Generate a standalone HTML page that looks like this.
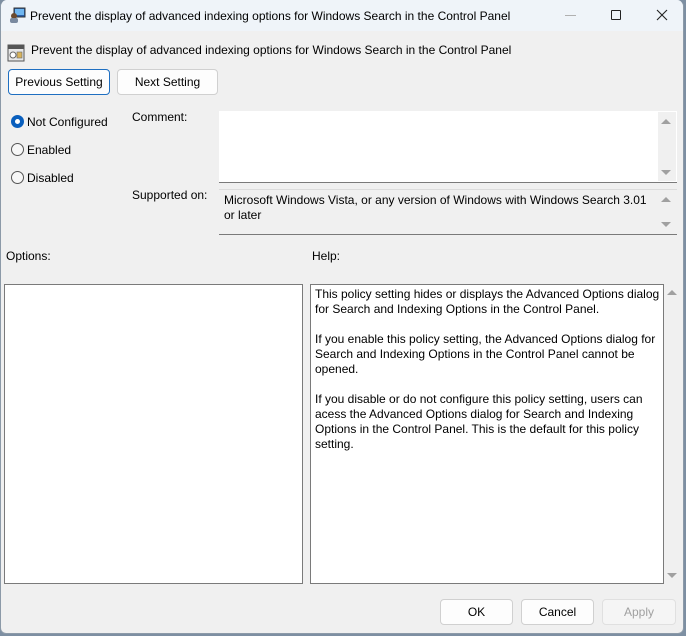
<!DOCTYPE html>
<html><head><meta charset="utf-8"><style>
*{margin:0;padding:0;box-sizing:border-box}
body{width:686px;height:636px;background:#7d8fa2;position:relative;overflow:hidden;font-family:"Liberation Sans",sans-serif;font-size:12px;color:#000}
.win{position:absolute;left:0;top:0;width:684px;height:634px;background:#f0f0f0;border-radius:7px 7px 6px 6px;overflow:hidden;border:1px solid #8c9aa8;border-top:none}
.tb{position:absolute;left:0;top:0;width:100%;height:31px;background:#eff4f9}
.a{position:absolute;white-space:nowrap}
.btn{position:absolute;height:26px;background:#fdfdfd;border:1px solid #d0d0d0;border-radius:4px;text-align:center;line-height:24px}
.box{position:absolute;background:#fff;border:1px solid #7a7a7a}
.rad{position:absolute;left:10px;width:13px;height:13px;border-radius:50%;border:1px solid #555;background:#f7f7f7}
.up,.dn{position:absolute;width:0;height:0;border-left:5px solid transparent;border-right:5px solid transparent}
.up{border-bottom:5px solid #a0a0a0}.dn{border-top:5px solid #a0a0a0}
.help{line-height:15px}
</style></head><body>
<div class="win">
<div class="tb"></div>
<svg class="a" style="left:8px;top:7px" width="17" height="17" viewBox="0 0 17 17"><rect x="5" y="1" width="11" height="9" fill="#2a5fa8" stroke="#333" stroke-width="1"/><rect x="6" y="2" width="9" height="6" fill="#6fb6f0"/><circle cx="5" cy="9" r="3" fill="#6b4a2e"/><rect x="1" y="11" width="8" height="5" rx="2" fill="#7a8aa0"/></svg>
<div class="a" style="left:29px;top:9px">Prevent the display of advanced indexing options for Windows Search in the Control Panel</div>
<div class="a" style="left:564px;top:15px;width:11px;height:1px;background:#b0b0b0"></div>
<div class="a" style="left:610px;top:10px;width:10px;height:10px;border:1px solid #222;border-radius:1px"></div>
<svg class="a" style="left:655px;top:9px" width="12" height="12"><path d="M1 1L11 11M11 1L1 11" stroke="#222" stroke-width="1.1"/></svg>
<svg class="a" style="left:6px;top:44px" width="18" height="18" viewBox="0 0 18 18"><rect x="1" y="1" width="16" height="16" fill="#e8e8e8" stroke="#555"/><rect x="1" y="1" width="16" height="4" fill="#555"/><circle cx="6" cy="11" r="3" fill="#fff" stroke="#666"/><rect x="10" y="8" width="5" height="6" fill="#d9b35a" stroke="#666" stroke-width=".6"/></svg>
<div class="a" style="left:30px;top:43px">Prevent the display of advanced indexing options for Windows Search in the Control Panel</div>
<div class="btn" style="left:7px;top:69px;width:102px;border-color:#1f6fc1">Previous Setting</div>
<div class="btn" style="left:116px;top:69px;width:101px">Next Setting</div>
<div class="rad" style="top:115px;border:4px solid #0a5fbd;background:#fff"></div>
<div class="a" style="left:26px;top:115px">Not Configured</div>
<div class="rad" style="top:143px"></div><div class="a" style="left:26px;top:143px">Enabled</div>
<div class="rad" style="top:171px"></div><div class="a" style="left:26px;top:171px">Disabled</div>
<div class="a" style="left:131px;top:110px">Comment:</div>
<div class="box" style="left:218px;top:111px;width:458px;height:72px;border:none;border-bottom:1px solid #7a7a7a"></div>
<div class="a" style="left:657px;top:112px;width:18px;height:69px;background:#f0f0f0"></div>
<div class="up" style="left:660px;top:119px"></div><div class="dn" style="left:660px;top:170px"></div>
<div class="a" style="left:131px;top:188px">Supported on:</div>
<div class="box" style="left:218px;top:189px;width:458px;height:46px;background:#f0f0f0;border:none;border-bottom:1px solid #7a7a7a;border-top:1px solid #dcdcdc"></div>
<div class="a" style="left:223px;top:193px;line-height:15px">Microsoft Windows Vista, or any version of Windows with Windows Search 3.01<br>or later</div>
<div class="up" style="left:660px;top:197px"></div><div class="dn" style="left:660px;top:222px"></div>
<div class="a" style="left:5px;top:249px">Options:</div>
<div class="a" style="left:311px;top:249px">Help:</div>
<div class="box" style="left:3px;top:284px;width:299px;height:300px"></div>
<div class="box" style="left:309px;top:284px;width:354px;height:300px;overflow:hidden"></div>
<div class="a help" style="left:314px;top:287px;width:345px;overflow:hidden">This policy setting hides or displays the Advanced Options dialog<br>for Search and Indexing Options in the Control Panel.<br><br>If you enable this policy setting, the Advanced Options dialog for<br>Search and Indexing Options in the Control Panel cannot be<br>opened.<br><br>If you disable or do not configure this policy setting, users can<br>acess the Advanced Options dialog for Search and Indexing<br>Options in the Control Panel. This is the default for this policy<br>setting.</div>
<div class="up" style="left:666px;top:290px"></div><div class="dn" style="left:666px;top:573px"></div>
<div class="btn" style="left:439px;top:599px;width:73px">OK</div>
<div class="btn" style="left:520px;top:599px;width:73px">Cancel</div>
<div class="btn" style="left:601px;top:599px;width:74px;color:#a0a0a0;background:#f5f5f5;border-color:#e0e0e0">Apply</div>
</div>
</body></html>
